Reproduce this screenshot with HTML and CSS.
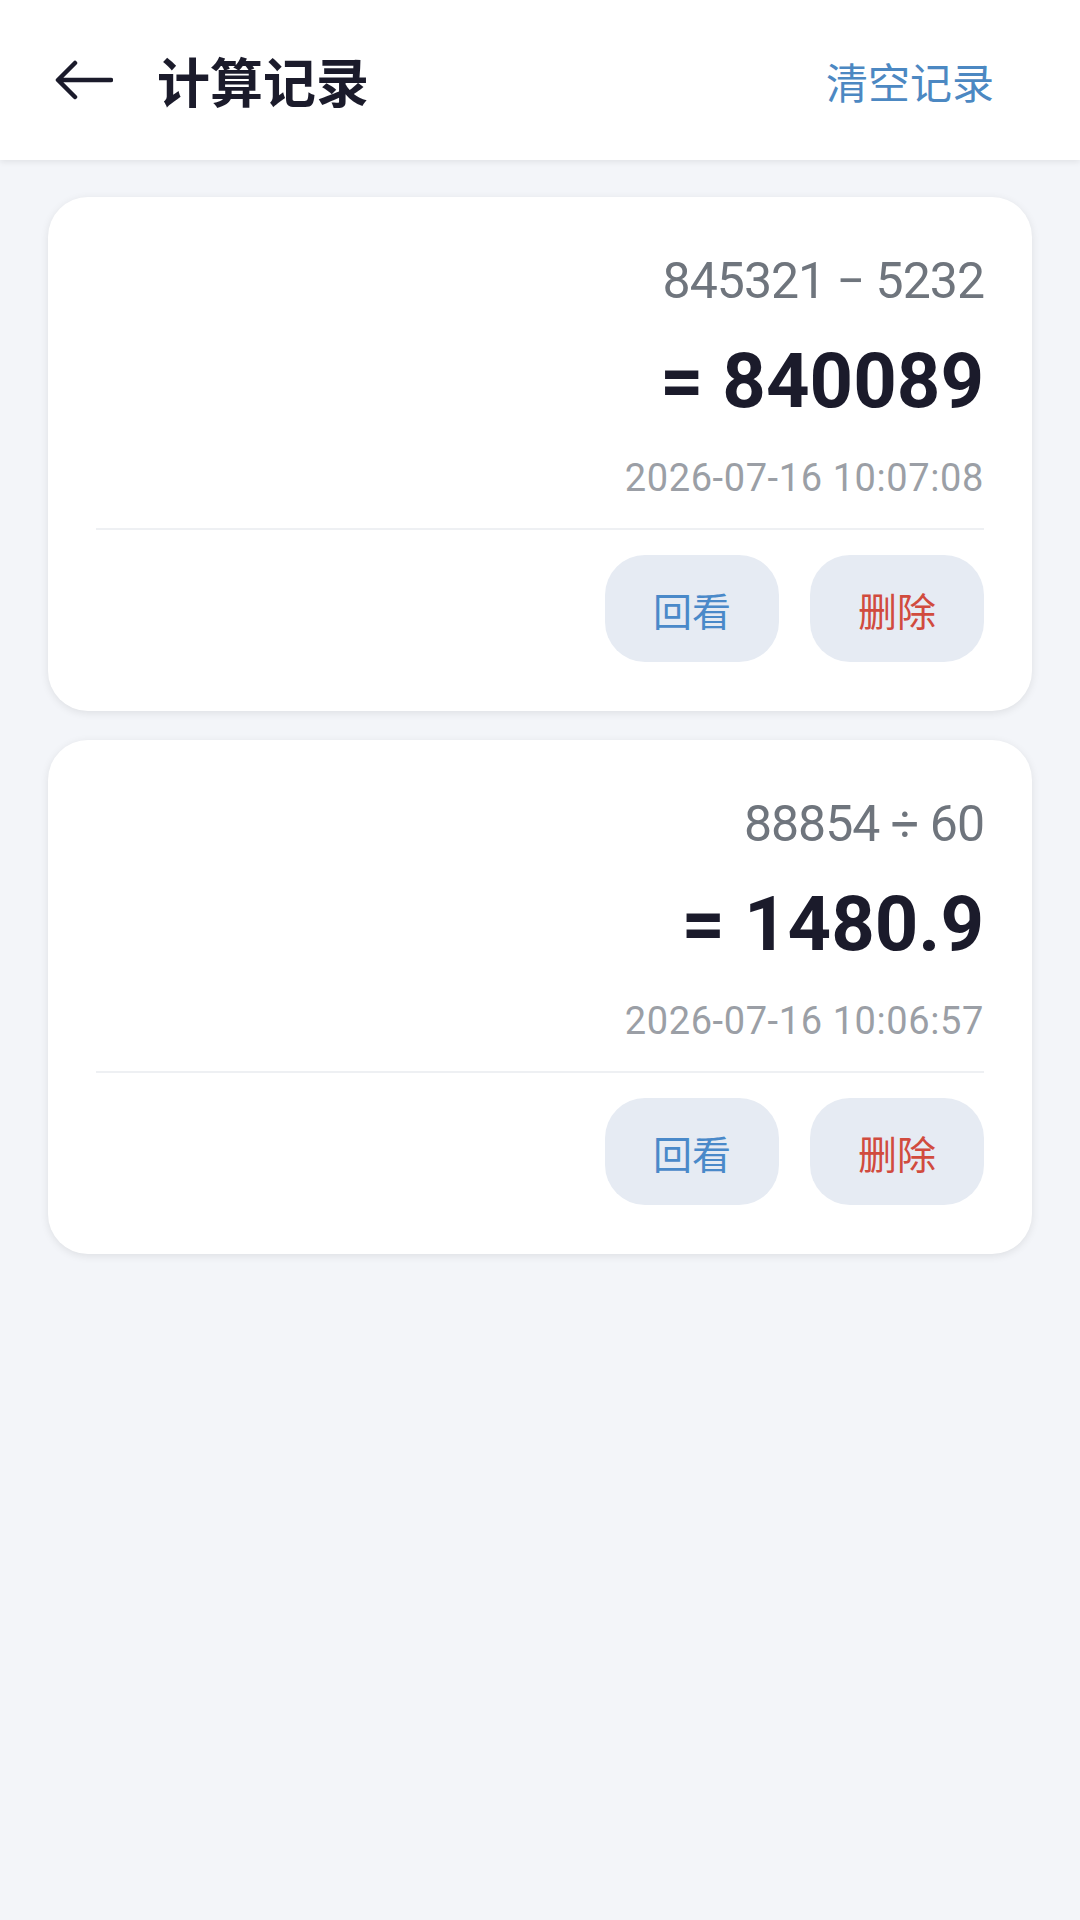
FILE: index.html
```html
<!DOCTYPE html>
<html lang="zh-CN">
<head>
    <meta charset="UTF-8">
    <meta name="viewport" content="width=device-width, initial-scale=1.0">
    <title>计算记录</title>
    <link rel="stylesheet" href="styles.css">
</head>
<body>
    <header class="top-bar">
        <div class="top-left">
            <svg class="back" width="58" height="40" viewBox="0 0 58 40">
                <path d="M56 20 H4 M20 3 L3 20 L20 37" fill="none" stroke="#1b1b2b" stroke-width="4.5" stroke-linecap="round" stroke-linejoin="round"/>
            </svg>
            <h1>计算记录</h1>
        </div>
        <span class="clear-btn">清空记录</span>
    </header>

    <div class="history-list">
        <div class="record">
            <div class="expr">845321 − 5232</div>
            <div class="result">= 840089</div>
            <div class="time">2026-07-16 10:07:08</div>
            <div class="divider"></div>
            <div class="actions">
                <button class="btn review">回看</button>
                <button class="btn delete">删除</button>
            </div>
        </div>
        <div class="record">
            <div class="expr">88854 ÷ 60</div>
            <div class="result">= 1480.9</div>
            <div class="time">2026-07-16 10:06:57</div>
            <div class="divider"></div>
            <div class="actions">
                <button class="btn review">回看</button>
                <button class="btn delete">删除</button>
            </div>
        </div>
    </div>
</body>
</html>
```

FILE: styles.css
```css
body {
    margin: 0;
    font-family: Roboto, "Noto Sans CJK SC", sans-serif;
    background-color: #f3f5f9;
    min-height: 1920px;
}
.top-bar {
    height: 160px;
    background: #ffffff;
    display: flex;
    align-items: center;
    justify-content: space-between;
    padding: 0 86px 0 55px;
    box-shadow: 0 2px 6px rgba(0, 0, 0, 0.08);
    position: relative;
}
.top-left {
    display: flex;
    align-items: center;
    gap: 44px;
}
.back {
    display: block;
}
h1 {
    margin: 0;
    font-size: 53px;
    font-weight: bold;
    color: #1b1b2b;
}
.clear-btn {
    font-size: 42px;
    color: #4c88c2;
}
.history-list {
    display: flex;
    flex-direction: column;
    gap: 29px;
    padding: 37px 48px;
}
.record {
    background: #ffffff;
    border-radius: 40px;
    padding: 54px 48px 49px;
    box-shadow: 0 2px 8px rgba(0, 0, 0, 0.09);
    text-align: right;
}
.expr {
    font-size: 50px;
    line-height: 60px;
    letter-spacing: -1px;
    color: #6f757d;
}
.result {
    margin-top: 25px;
    font-size: 76px;
    line-height: 91px;
    font-weight: bold;
    color: #1b1b2b;
}
.time {
    margin-top: 29px;
    font-size: 38px;
    line-height: 45px;
    letter-spacing: 0.6px;
    color: #9b9fa6;
}
.divider {
    margin-top: 27px;
    height: 2px;
    background: #eef0f3;
}
.actions {
    display: flex;
    justify-content: flex-end;
    gap: 31px;
    margin-top: 25px;
}
.btn {
    width: 174px;
    height: 107px;
    border: none;
    border-radius: 40px;
    background: #e6ebf3;
    font-family: Roboto, "Noto Sans CJK SC", sans-serif;
    font-size: 39px;
    cursor: pointer;
}
.review {
    color: #4a89c9;
}
.delete {
    color: #d14b3e;
}
```
